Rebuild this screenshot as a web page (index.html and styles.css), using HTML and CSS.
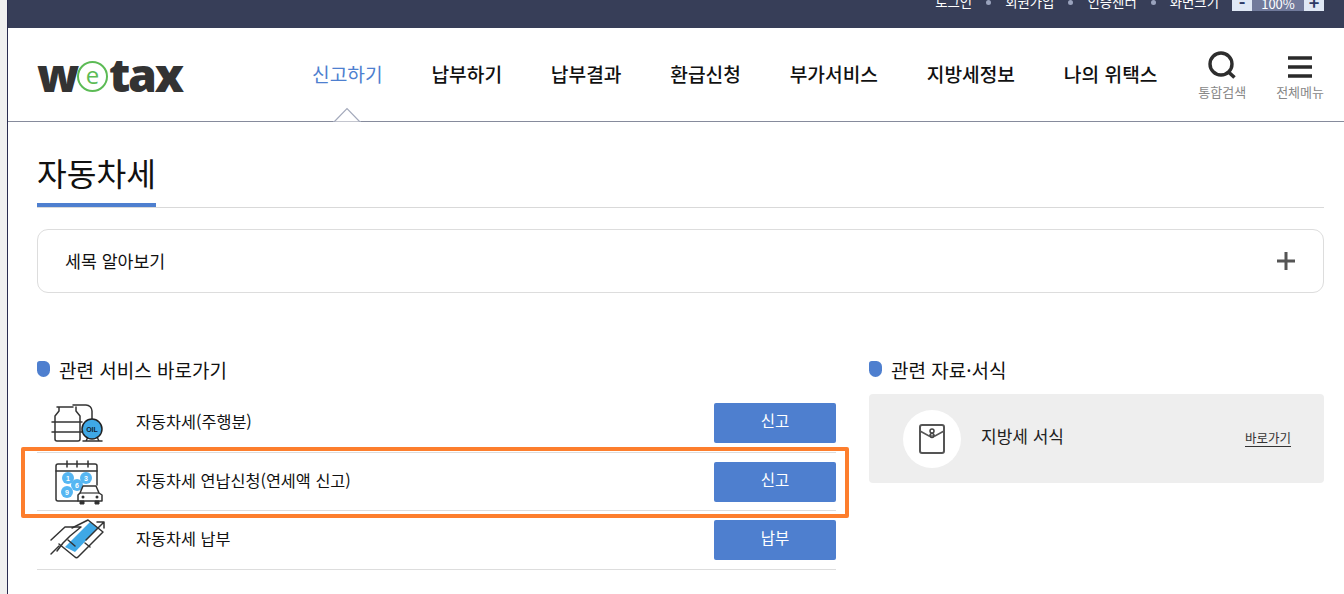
FILE: index.html
```html
<!DOCTYPE html>
<html lang="ko">
<head>
<meta charset="utf-8">
<title>자동차세 - 위택스</title>
<link rel="stylesheet" href="styles.css">
</head>
<body>
<div class="shell">
  <div class="topbar">
    <a class="util">로그인</a><i class="dot"></i>
    <a class="util">회원가입</a><i class="dot"></i>
    <a class="util">인증센터</a><i class="dot"></i>
    <a class="util">화면크기</a>
    <div class="zoomctl">
      <span class="zbtn">-</span><span class="zval">100%</span><span class="zbtn">+</span>
    </div>
  </div>
  <header class="header">
    <a class="logo"><span>w</span><span class="logo-e">e</span><span>tax</span></a>
    <nav class="nav">
      <a class="nav-item active">신고하기</a>
      <a class="nav-item">납부하기</a>
      <a class="nav-item">납부결과</a>
      <a class="nav-item">환급신청</a>
      <a class="nav-item">부가서비스</a>
      <a class="nav-item">지방세정보</a>
      <a class="nav-item">나의 위택스</a>
    </nav>
    <div class="tools">
      <a class="tool tool-search">
        <svg width="30" height="28" viewBox="0 0 30 28"><circle cx="14" cy="13" r="11" fill="none" stroke="#2e2e2e" stroke-width="3.4"/><path d="M21.500 21l6 5.500" stroke="#2e2e2e" stroke-width="3.600" fill="none"/></svg>
        <span>통합검색</span>
      </a>
      <a class="tool tool-menu">
        <svg width="24" height="22" viewBox="0 0 24 22"><path d="M0 2h24M0 11h24M0 20h24" stroke="#2a2a2a" stroke-width="3.4"/></svg>
        <span>전체메뉴</span>
      </a>
    </div>
    <svg class="caret" width="28" height="15" viewBox="0 0 28 15"><path d="M0 14.500h1.500L14 1.500 26.500 14.500H28" fill="#fff" stroke="#a3a9bb" stroke-width="1.200"/></svg>
  </header>
  <main class="content">
    <div class="title-wrap"><h1 class="title">자동차세</h1></div>
    <div class="accordion">
      <span>세목 알아보기</span>
      <svg width="20" height="20" viewBox="0 0 20 20"><path d="M10 1v18M1 10h18" stroke="#555" stroke-width="3"/></svg>
    </div>
    <div class="columns">
      <section class="col-left">
        <h2 class="section-head">관련 서비스 바로가기</h2>
        <ul class="rows">
          <li class="row">
            <svg class="row-icon" width="64" height="48" viewBox="0 0 64 48">
              <g fill="none" stroke="#333" stroke-width="1.500" stroke-linecap="round" stroke-linejoin="round">
                <path d="M15 8h16M17 8v4l-4 5v23a2 2 0 0 0 2 2h21a2 2 0 0 0 2-2V17l-4-5V8"/>
                <path d="M10 23h30M10 33h30"/>
                <path d="M31 6h13a6 6 0 0 1 6 6v8"/>
                <path d="M41 42h19M44 42l2-4M57 42l-2-4"/>
              </g>
              <circle cx="50" cy="30" r="10" fill="#3fa8e6" stroke="#222" stroke-width="1.500"/>
              <text x="50" y="32.500" class="oil">OIL</text>
            </svg>
            <span class="row-label">자동차세(주행분)</span>
            <a class="btn">신고</a>
          </li>
          <li class="row">
            <svg class="row-icon" width="64" height="48" viewBox="0 0 64 48">
              <g fill="none" stroke="#333" stroke-width="1.500" stroke-linecap="round">
                <path d="M36 43H16a2 2 0 0 1-2-2V8a2 2 0 0 1 2-2h37a2 2 0 0 1 2 2v19"/>
                <path d="M14 13h41M25 3v6M35 3v6M46 3v6"/>
              </g>
              <g fill="#56b6f2">
                <circle cx="26" cy="20" r="6"/><circle cx="44" cy="20" r="6"/><circle cx="35" cy="27" r="6"/><circle cx="25" cy="34" r="6"/>
              </g>
              <g class="num"><text x="26" y="22.500">1</text><text x="44" y="22.500">3</text><text x="35" y="29.500">6</text><text x="25" y="36.500">9</text></g>
              <path d="M38 35l3-7h13l3 7 3 2v6H36v-6z" fill="#fff" stroke="#333" stroke-width="1.500" stroke-linejoin="round"/>
              <path d="M38 35h19" stroke="#333" stroke-width="1.200"/>
              <circle cx="41" cy="39" r="1.500" fill="#333"/><circle cx="55" cy="39" r="1.500" fill="#333"/>
              <path d="M38 43h4v3h-4zM53 43h4v3h-4z" fill="#333" stroke="#333"/>
            </svg>
            <span class="row-label">자동차세 연납신청(연세액 신고)</span>
            <a class="btn">신고</a>
          </li>
          <li class="row">
            <svg class="row-icon" width="64" height="48" viewBox="0 0 64 48">
              <path d="M23 31l10 5 23-24-8-6z" fill="#3fa8e6"/>
              <g fill="none" stroke="#333" stroke-width="1.500" stroke-linejoin="round" stroke-linecap="round">
                <path d="M30 12L46 4l15 12-25 25a2 2 0 0 1-3 0L17 28"/>
                <path d="M9 24L23 11h16L28 20l-7 7-6 8"/>
                <path d="M26 24l7 6M43 27l5 4"/>
                <path d="M44 24L61 7M55 6h7v6"/>
                <path d="M9 38l8-8"/>
              </g>
            </svg>
            <span class="row-label">자동차세 납부</span>
            <a class="btn">납부</a>
          </li>
        </ul>
      </section>
      <section class="col-right">
        <h2 class="section-head">관련 자료·서식</h2>
        <div class="forms-card">
          <span class="circle">
            <svg width="26" height="30" viewBox="0 0 26 30">
              <path d="M1 3a2 2 0 0 1 2-2h20a2 2 0 0 1 2 2v24a2 2 0 0 1-2 2H3a2 2 0 0 1-2-2z" fill="none" stroke="#555" stroke-width="2"/>
              <path d="M1 7l9 5h6l9-5" fill="none" stroke="#555" stroke-width="1.600"/>
              <circle cx="13" cy="7" r="2" fill="none" stroke="#444" stroke-width="1.500"/><circle cx="13" cy="11.500" r="2" fill="none" stroke="#444" stroke-width="1.500"/>
            </svg>
          </span>
          <span class="forms-label">지방세 서식</span>
          <a class="forms-link">바로가기</a>
        </div>
      </section>
    </div>
  </main>
  <div class="highlight"></div>
</div>
</body>
</html>
```
FILE: styles.css
```css
* { box-sizing: border-box; }
html, body { margin: 0; padding: 0; height: 594px; overflow: hidden; }
body {
  background: #f0f0f0;
  font-family: "Noto Sans CJK KR", "Noto Sans", sans-serif;
  color: #111;
  padding-left: 7px;
}
a { color: inherit; text-decoration: none; }
ul { list-style: none; margin: 0; padding: 0; }
h1, h2 { margin: 0; font-weight: 400; }

.shell {
  position: relative;
  height: 594px;
  background: #fff;
  border-left: 1px solid #2a2c50;
  overflow: hidden;
}

.topbar {
  height: 28px;
  background: #373e58;
  display: flex;
  justify-content: flex-end;
  align-items: flex-start;
  padding-right: 20px;
  color: #fff;
  font-size: 13.400px;
  overflow: hidden;
}
.util { line-height: 20px; margin-top: -9px; }
.dot { width: 5px; height: 5px; border-radius: 50%; background: #9aa3bd; margin: 0 14px 0 14px; }
.zoomctl { display: flex; height: 11px; margin-left: 13px; line-height: 11px; font-size: 13px; }
.zbtn { width: 20px; background: #dfe8f5; color: #2c3a66; text-align: center; font-weight: 700; line-height: 4px; font-size: 18px; }
.zval { width: 52px; background: #717a9b; color: #fff; text-align: center; line-height: 8px; }

.header {
  position: relative;
  height: 94px;
  display: flex;
  align-items: flex-start;
  border-bottom: 1px solid #868b9c;
  padding-left: 29px;
}
.logo {
  width: 146px;
  margin-top: 21px;
  display: flex;
  align-items: center;
  font-family: "Open Sans", sans-serif;
  font-weight: 800;
  font-size: 46.500px;
  line-height: 50px;
  letter-spacing: -2.300px;
  color: #333;
}
.logo-e {
  width: 31px;
  height: 31px;
  flex: none;
  margin: 5px 1px 0 0;
  border: 2.500px solid #5cbb55;
  border-radius: 50%;
  color: #5cbb55;
  font-size: 24px;
  font-weight: 400;
  line-height: 23px;
  text-align: center;
  letter-spacing: 0;
}
.nav { display: flex; gap: 48.800px; margin-left: 129px; margin-top: 32px; }
.nav-item { font-size: 19.200px; font-weight: 500; line-height: 28px; color: #111; white-space: nowrap; }
.nav-item.active { color: #4e7fcf; font-weight: 400; }

.tools { display: flex; margin-left: auto; padding-right: 20px; margin-top: 23px; gap: 30px; }
.tool { display: flex; flex-direction: column; align-items: center; font-size: 13px; color: #888; line-height: 16px; }
.tool svg { display: block; }
.tool-search span { margin-top: 5px; }
.tool-menu { padding-top: 5px; }
.tool-menu span { margin-top: 6px; }
.caret { position: absolute; left: 325px; bottom: -1px; }

.content { padding: 0 20px 0 29px; }
.title-wrap { border-bottom: 1px solid #d9d9d9; height: 86px; }
.title {
  display: inline-block;
  height: 85px;
  padding-top: 27px;
  font-size: 32.300px;
  line-height: 46px;
  color: #111;
  border-bottom: 4px solid #4e7fcf;
}
.accordion {
  margin-top: 21px;
  height: 64px;
  border: 1px solid #ddd;
  border-radius: 11px;
  display: flex;
  align-items: center;
  justify-content: space-between;
  padding: 0 27px 0 27px;
  font-size: 17.300px;
}
.accordion span { margin-top: -2px; }
.columns { display: flex; gap: 33px; margin-top: 63px; }
.col-left { width: 799px; }
.col-right { flex: 1; }
.section-head {
  position: relative;
  font-size: 19px;
  line-height: 28px;
  padding-left: 22px;
  color: #111;
}
.section-head::before {
  content: "";
  position: absolute;
  left: 0;
  top: 5px;
  width: 13px;
  height: 16px;
  background: #4e7fcf;
  border-radius: 3px 6px 7px 7px;
}
.rows { margin-top: 10.300px; }
.row {
  height: 58.500px;
  border-bottom: 1px solid #ddd;
  display: flex;
  align-items: center;
}
.row-icon { flex: none; margin-left: 5px; margin-right: 30px; }
.row-label { flex: 1; font-size: 16.300px; margin-top: -4px; }
.btn {
  width: 122px;
  height: 40px;
  background: #4e7fcf;
  color: #fff;
  border-radius: 2px;
  font-size: 15.500px;
  line-height: 34px;
  text-align: center;
}
.oil { font: 700 7px "Liberation Sans", sans-serif; text-anchor: middle; fill: #123; }
.num text { font: 700 7px "Liberation Sans", sans-serif; text-anchor: middle; fill: #fff; }

.forms-card {
  margin-top: 10px;
  height: 89px;
  background: #eee;
  border-radius: 4px;
  display: flex;
  align-items: center;
  padding: 0 33px 0 34px;
}
.circle {
  width: 58px;
  height: 58px;
  border-radius: 50%;
  background: #fff;
  display: flex;
  align-items: center;
  justify-content: center;
  flex: none;
}
.forms-label { flex: 1; margin-left: 20px; font-size: 17px; margin-top: -6px; color: #222; }
.forms-link { font-size: 12.500px; line-height: 16px; border-bottom: 1px solid #333; color: #333; }

.highlight {
  position: absolute;
  left: 13px;
  top: 447px;
  width: 828px;
  height: 71px;
  border: 4px solid #fd7e2d;
  border-radius: 2px;
  pointer-events: none;
}
```
